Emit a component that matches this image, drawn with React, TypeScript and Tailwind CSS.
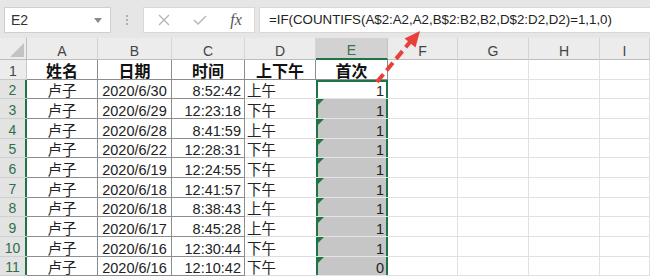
import React from "react";

const rows: [string, string, string, string, string][] = [
  ["卢子", "2020/6/30", "8:52:42", "上午", "1"],
  ["卢子", "2020/6/29", "12:23:18", "下午", "1"],
  ["卢子", "2020/6/28", "8:41:59", "上午", "1"],
  ["卢子", "2020/6/22", "12:28:31", "下午", "1"],
  ["卢子", "2020/6/19", "12:24:55", "下午", "1"],
  ["卢子", "2020/6/18", "12:41:57", "下午", "1"],
  ["卢子", "2020/6/18", "8:38:43", "上午", "1"],
  ["卢子", "2020/6/17", "8:45:28", "上午", "1"],
  ["卢子", "2020/6/16", "12:30:44", "下午", "1"],
  ["卢子", "2020/6/16", "12:10:42", "下午", "0"],
];

const heights = ["h-[19px]", "h-[20px]", "h-[20px]", "h-[19px]", "h-[20px]", "h-[20px]", "h-[19px]", "h-[20px]", "h-[20px]", "h-[19px]"];

const font = { fontFamily: '"Liberation Sans", "Noto Sans CJK SC", sans-serif' };

function ColHead({ label, sel }: { label: string; sel?: boolean }) {
  return (
    <div
      className={
        "flex items-end justify-center leading-[14px] pb-[1px] text-[14px] border-r " +
        (sel
          ? "bg-[#d2d2d2] text-[#3e6e4e] border-[#c4c4c4] border-b-2 border-b-[#217346]"
          : "bg-[#ececec] text-[#444] border-[#d4d4d4] border-b border-b-[#bdbdbd]")
      }
    >
      {label}
    </div>
  );
}

export default function App() {
  return (
    <div className="w-[650px] h-[276px] overflow-hidden bg-white relative select-none" style={font}>
      {/* formula bar */}
      <div className="h-[38px] bg-[#e6e6e6] flex items-start pt-[7px] pl-[4px] gap-0">
        <div className="w-[107px] h-[26px] bg-white border border-[#cfcfcf] flex items-center justify-between pl-[6px] pr-[8px]">
          <span className="text-[14px] text-[#333]">E2</span>
          <svg width="8" height="5" viewBox="0 0 8 5">
            <polygon points="0,0 8,0 4,5" fill="#8a8a8a" />
          </svg>
        </div>
        <div className="w-[32px] h-[26px] flex flex-col items-center justify-center gap-[2px]">
          <span className="block w-[2px] h-[2px] bg-[#b0b0b0]" />
          <span className="block w-[2px] h-[2px] bg-[#b0b0b0]" />
          <span className="block w-[2px] h-[2px] bg-[#b0b0b0]" />
        </div>
        <div className="w-[112px] h-[26px] bg-white border border-[#d8d8d8] flex items-center">
          <div className="w-[36px] flex justify-center ml-[2px]">
            <svg width="12" height="12" viewBox="0 0 12 12">
              <path d="M1 1 L11 11 M11 1 L1 11" stroke="#b5b5b5" strokeWidth="1.4" />
            </svg>
          </div>
          <div className="w-[36px] flex justify-center">
            <svg width="14" height="12" viewBox="0 0 14 12">
              <path d="M1 6 L5 10 L13 2" stroke="#b5b5b5" strokeWidth="1.4" fill="none" />
            </svg>
          </div>
          <div className="w-[36px] flex justify-center">
            <span className="italic text-[16px] text-[#555]" style={{ fontFamily: '"Liberation Serif", serif' }}>
              fx
            </span>
          </div>
        </div>
        <div className="flex-1 h-[26px] bg-white border border-[#d8d8d8] border-r-0 ml-[4px] flex items-center pl-[9px]">
          <span className="text-[13.3px] text-[#222] whitespace-nowrap">=IF(COUNTIFS(A$2:A2,A2,B$2:B2,B2,D$2:D2,D2)=1,1,0)</span>
        </div>
      </div>

      {/* grid */}
      <div className="grid grid-cols-[27px_71px_74px_73px_71px_72px_70px_71px_71px_1fr]">
        {/* header row */}
        <div className="h-[22px] bg-[#ececec] border-r border-b border-[#bdbdbd] flex items-end justify-end">
          <svg width="14" height="14" viewBox="0 0 14 14" className="mb-[2px] mr-[2px]">
            <polygon points="14,0 14,14 0,14" fill="#c3c3c3" />
          </svg>
        </div>
        <ColHead label="A" />
        <ColHead label="B" />
        <ColHead label="C" />
        <ColHead label="D" />
        <ColHead label="E" sel />
        <ColHead label="F" />
        <ColHead label="G" />
        <ColHead label="H" />
        <ColHead label="I" />

        {/* row 1 */}
        <div className="h-[20px] bg-[#ececec] border-r border-b border-[#c8c8c8] text-[#444] text-[14px] flex items-end justify-center leading-[14px] pb-[1px]">
          1
        </div>
        {["姓名", "日期", "时间"].map((t) => (
          <div key={t} className="h-[20px] border-r border-b border-[#8c8c8c] flex items-end justify-center leading-[15px] text-[16px] font-bold text-[#111]">
            {t}
          </div>
        ))}
        <div className="h-[20px] border-r border-b border-r-[#8c8c8c] border-b-[#8c8c8c] flex items-end justify-center leading-[15px] text-[16px] font-bold text-[#111]">
          上下午
        </div>
        <div className="h-[20px] border-r border-b border-[#8c8c8c] flex items-end justify-center leading-[15px] text-[16px] font-bold text-[#111]">
          首次
        </div>
        {[0, 1, 2, 3].map((i) => (
          <div key={i} className="h-[20px] border-r border-b border-[#e1e1e1]" />
        ))}

        {rows.map((r, i) => {
          const h = heights[i];
          const first = i === 0;
          return (
            <React.Fragment key={i}>
              <div className={h + " bg-[#e3e3e3] border-b border-[#cfcfcf] shadow-[inset_-2px_0_0_#217346] text-[#2f7048] text-[14px] flex items-end justify-center leading-[14px] pb-[1px] pr-[2px]"}>
                {i + 2}
              </div>
              <div className={h + " border-r border-b border-[#8c8c8c] flex items-end justify-center leading-[14px] text-[14.5px] text-[#222]"}>
                {r[0]}
              </div>
              <div className={h + " border-r border-b border-[#8c8c8c] flex items-end justify-center leading-[14px] text-[14.5px] text-[#222]"}>
                {r[1]}
              </div>
              <div className={h + " border-r border-b border-[#8c8c8c] flex items-end justify-end pr-[3px] leading-[14px] text-[14.5px] text-[#222]"}>
                {r[2]}
              </div>
              <div className={h + " border-b border-[#dcdcdc] flex items-end pl-[2px] leading-[14px] text-[14.5px] text-[#222]"}>
                {r[3]}
              </div>
              <div
                className={
                  h +
                  " relative border-b border-[#e4e4e4] flex items-end justify-end pr-[4px] leading-[14px] text-[14.5px] text-[#222] " +
                  (first
                    ? "bg-white shadow-[inset_2px_2px_0_#217346,inset_-2px_0_0_#217346]"
                    : "bg-[#c6c6c6] shadow-[inset_2px_0_0_#217346,inset_-2px_0_0_#217346]")
                }
              >
                {!first && (
                  <svg width="6" height="6" viewBox="0 0 6 6" className="absolute left-[2px] top-0">
                    <polygon points="0,0 6,0 0,6" fill="#1e7a3c" />
                  </svg>
                )}
                {r[4]}
              </div>
              {[0, 1, 2, 3].map((k) => (
                <div key={k} className={h + " border-r border-b border-[#e1e1e1]"} />
              ))}
            </React.Fragment>
          );
        })}
      </div>

      {/* red dashed arrow */}
      <svg className="absolute left-0 top-0 pointer-events-none" width="650" height="276" viewBox="0 0 650 276">
        <line x1="377" y1="82" x2="410" y2="42" stroke="#e8403a" strokeWidth="4" strokeDasharray="10 5" />
        <polygon points="420,31 404.5,38.5 415.5,47.5" fill="#e8403a" />
      </svg>
    </div>
  );
}
